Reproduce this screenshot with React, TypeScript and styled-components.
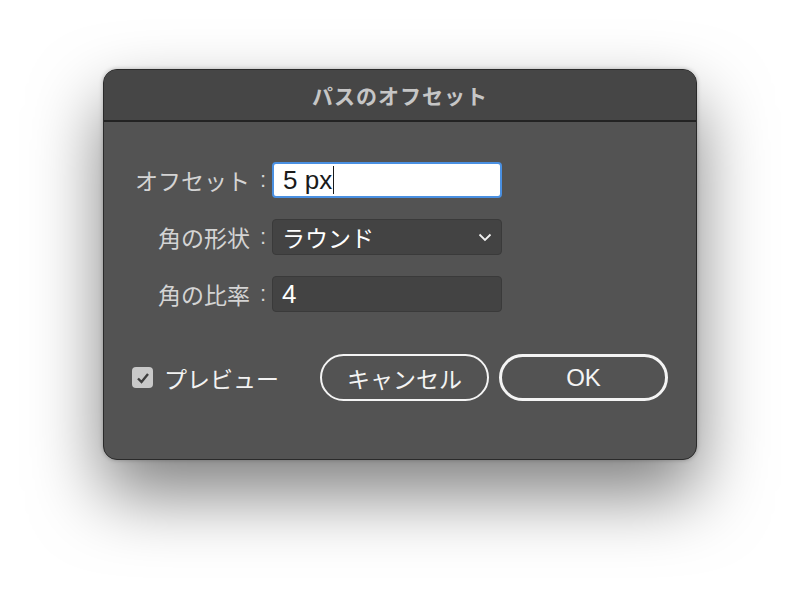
import { createGlobalStyle, styled } from "styled-components";

const GlobalStyle = createGlobalStyle`
  html, body {
    margin: 0;
    padding: 0;
    background: #ffffff;
  }
  body {
    font-family: "Liberation Sans", "Noto Sans CJK JP", sans-serif;
  }
`;

const Page = styled.div`
  width: 800px;
  height: 595px;
  padding: 69px 0 0 103px;
  box-sizing: border-box;
  overflow: hidden;
`;

const Dialog = styled.div`
  width: 594px;
  height: 391px;
  box-sizing: border-box;
  background-color: #535353;
  border: 1px solid #2a2a2a;
  border-radius: 14px;
  box-shadow: 0 34px 70px rgba(0, 0, 0, 0.5), 0 0 4px rgba(0, 0, 0, 0.25);
  display: flex;
  flex-direction: column;
  overflow: hidden;
`;

const TitleBar = styled.header`
  height: 52px;
  flex-shrink: 0;
  background-color: #464646;
  border-bottom: 2px solid #232323;
  box-sizing: border-box;
  display: flex;
  align-items: center;
  justify-content: center;
  color: #c6c6c6;
  font-family: "Noto Sans CJK JP", sans-serif;
  font-size: 21px;
  font-weight: 700;
  letter-spacing: 1px;
`;

const Body = styled.div`
  flex: 1;
  display: flex;
  flex-direction: column;
  padding: 40px 28px 0 28px;
`;

const Form = styled.div`
  display: grid;
  grid-template-columns: 140px 230px;
  row-gap: 21px;
  align-items: center;
`;

const Label = styled.label`
  display: flex;
  justify-content: flex-end;
  align-items: center;
  color: #d4d4d4;
  font-family: "Noto Sans CJK JP", sans-serif;
  font-size: 23px;
  line-height: 36px;
  white-space: nowrap;
`;

const Colon = styled.span`
  font-family: "Liberation Sans", sans-serif;
  font-size: 22px;
  margin: 0 6px 0 10px;
`;

const Field = styled.div<{ $focused?: boolean }>`
  height: 36px;
  box-sizing: border-box;
  border-radius: 4px;
  display: flex;
  align-items: center;
  padding: 0 9px;
  font-size: 26px;
  ${({ $focused }) =>
    $focused
      ? `
    background: #ffffff;
    color: #1a1a1a;
    border: 2px solid #4a90e2;
  `
      : `
    background: #434343;
    color: #ffffff;
    border: 1px solid #3a3a3a;
  `}
`;

const Caret = styled.span`
  display: inline-block;
  width: 1px;
  height: 28px;
  background: #1a1a1a;
  margin-left: 1px;
`;

const SelectText = styled.span`
  flex: 1;
  font-family: "Noto Sans CJK JP", sans-serif;
  font-size: 23px;
  color: #ffffff;
`;

const Footer = styled.div`
  display: flex;
  align-items: center;
  margin-top: 42px;
`;

const CheckRow = styled.label`
  display: flex;
  align-items: center;
  gap: 11px;
  width: 190px;
  color: #f2f2f2;
  font-family: "Noto Sans CJK JP", sans-serif;
  font-size: 23px;
`;

const CheckBox = styled.span`
  width: 21px;
  height: 21px;
  border-radius: 4px;
  background: #c9c9c9;
  display: flex;
  align-items: center;
  justify-content: center;
`;

const Buttons = styled.div`
  display: flex;
  gap: 10px;
`;

const PillButton = styled.button<{ $primary?: boolean }>`
  width: 169px;
  height: 47px;
  border-radius: 24px;
  background: transparent;
  color: #f4f4f4;
  border: ${({ $primary }) => ($primary ? "3px" : "2px")} solid #f4f4f4;
  font-family: "Liberation Sans", "Noto Sans CJK JP", sans-serif;
  font-size: 24px;
  display: flex;
  align-items: center;
  justify-content: center;
  padding: 0;
`;

const JpText = styled.span`
  font-family: "Noto Sans CJK JP", sans-serif;
  font-size: 23px;
`;

export default function App() {
  return (
    <Page>
      <GlobalStyle />
      <Dialog>
        <TitleBar>パスのオフセット</TitleBar>
        <Body>
          <Form>
            <Label>
              オフセット<Colon>:</Colon>
            </Label>
            <Field $focused>
              5 px
              <Caret />
            </Field>
            <Label>
              角の形状<Colon>:</Colon>
            </Label>
            <Field>
              <SelectText>ラウンド</SelectText>
              <svg width="14" height="9" viewBox="0 0 14 9">
                <path d="M1.5 1.5 L7 7 L12.5 1.5" fill="none" stroke="#f0f0f0" strokeWidth="1.8" />
              </svg>
            </Field>
            <Label>
              角の比率<Colon>:</Colon>
            </Label>
            <Field>4</Field>
          </Form>
          <Footer>
            <CheckRow>
              <CheckBox>
                <svg width="14" height="12" viewBox="0 0 14 12">
                  <path d="M2 6.5 L5.5 10 L12 2" fill="none" stroke="#3e3e3e" strokeWidth="2.4" />
                </svg>
              </CheckBox>
              プレビュー
            </CheckRow>
            <Buttons>
              <PillButton>
                <JpText>キャンセル</JpText>
              </PillButton>
              <PillButton $primary>OK</PillButton>
            </Buttons>
          </Footer>
        </Body>
      </Dialog>
    </Page>
  );
}
